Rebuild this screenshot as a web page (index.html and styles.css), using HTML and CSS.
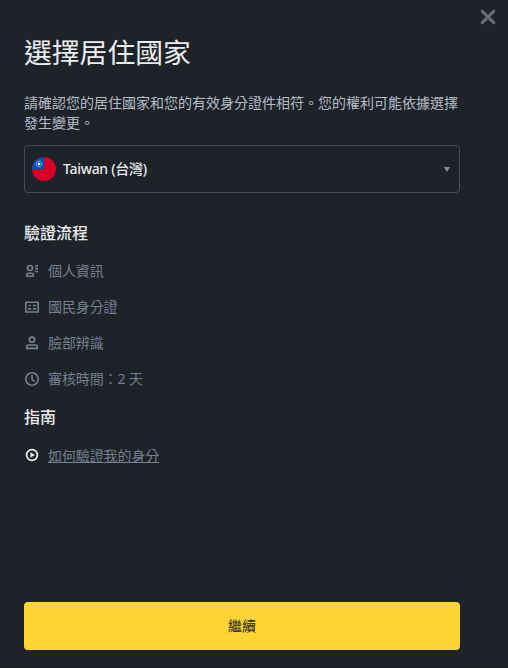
FILE: index.html
```html
<!DOCTYPE html>
<html lang="zh-Hant">
<head>
<meta charset="utf-8">
<title>選擇居住國家</title>
<link rel="stylesheet" href="styles.css">
</head>
<body>

<div class="modal">
	<button class="close" aria-label="close">
		<svg viewBox="0 0 16 16"><path d="M2.3 2.3l11.4 11.4M13.7 2.3L2.3 13.7"/></svg>
	</button>

	<h1>選擇居住國家</h1>
	<p class="intro">請確認您的居住國家和您的有效身分證件相符。您的權利可能依據選擇發生變更。</p>

	<div class="select">
		<svg class="flag" viewBox="0 0 24 24">
			<clipPath id="round"><circle cx="12" cy="12" r="12"/></clipPath>
			<g clip-path="url(#round)">
				<rect width="24" height="24" fill="#d80027"/>
				<rect width="12" height="12" fill="#0052b4"/>
				<circle cx="7" cy="7" r="2.8" fill="none" stroke="#a9c6e8" stroke-width="1" stroke-dasharray="1.1 .36"/>
				<circle cx="7" cy="7" r="1.3" fill="#fff"/>
			</g>
		</svg>
		<span class="country">Taiwan (台灣)</span>
		<span class="arrow"></span>
	</div>

	<h2>驗證流程</h2>
	<ul class="steps">
		<li>
			<svg class="icon" viewBox="0 0 16 16"><circle cx="6" cy="5" r="2.5"/><path d="M2.7 13.2v-1.4q0-1.5 1.5-1.5h3.6q1.5 0 1.5 1.5v1.4zM11 2.7h3M11 5.6h3M11 8.5h3"/></svg>
			<span>個人資訊</span>
		</li>
		<li>
			<svg class="icon" viewBox="0 0 16 16"><path d="M1.8 3.2h12.4v9.8H1.8zM4 9.9h3.4M9 6.5h3M9 9.9h3M4.6 6.5h2.2"/></svg>
			<span>國民身分證</span>
		</li>
		<li>
			<svg class="icon" viewBox="0 0 16 16"><circle cx="8" cy="4.7" r="2.6"/><path d="M2.7 13.4v-1.6q0-1.8 1.8-1.8h7q1.8 0 1.8 1.8v1.6z"/></svg>
			<span>臉部辨識</span>
		</li>
		<li>
			<svg class="icon" viewBox="0 0 16 16"><circle cx="8" cy="8" r="6.2"/><path d="M8 4v4.3l2.4 2.5"/></svg>
			<span>審核時間：2 天</span>
		</li>
	</ul>

	<h2>指南</h2>
	<div class="guide">
		<svg class="icon play" viewBox="0 0 16 16"><circle cx="8" cy="8" r="5.4"/><path d="M6.4 5.2L11 8l-4.6 2.8z"/></svg>
		<a href="#">如何驗證我的身分</a>
	</div>

	<button class="continue">繼續</button>
</div>

</body>
</html>
```
FILE: styles.css
```css
* {
	box-sizing: border-box;
}

body {
	margin: 0;
	background: #1e2329;
	color: #eaecef;
	font-family: "Noto Sans", "Noto Sans CJK TC", sans-serif;
	font-size: 14px;
}

.modal {
	position: relative;
	display: flex;
	flex-direction: column;
	height: 668px;
	padding: 34px 48px 17px 24px;
	border-bottom: 1px solid #191c20;
}

button {
	border: 0;
	padding: 0;
	font: inherit;
}

.close {
	position: absolute;
	top: 9px;
	right: 12px;
	width: 16px;
	height: 16px;
	background: none;
}
.close svg {
	display: block;
	fill: none;
	stroke: #646b78;
	stroke-width: 3.2;
	stroke-linecap: round;
}

h1 {
	margin: 0;
	font-size: 27.8px;
	font-weight: 400;
	line-height: 36px;
}

.intro {
	margin: 23px 0 0;
	color: #b7bdc6;
	line-height: 20px;
}

.select {
	display: flex;
	align-items: center;
	height: 48px;
	margin-top: 12px;
	padding: 0 9px 0 7px;
	border: 1px solid #474d57;
	border-radius: 4px;
}
.flag {
	width: 24px;
	height: 24px;
}
.country {
	flex: 1;
	margin: -2px 0 0 7px;
	font-weight: 500;
	letter-spacing: -.3px;
}
.arrow {
	border: 3px solid transparent;
	border-top: 5px solid #848e9c;
	border-bottom: 0;
}

h2 {
	margin: 28px 0 0;
	font-size: 16px;
	font-weight: 500;
	line-height: 24px;
}

.steps {
	margin: 8px 0 0;
	padding: 0;
	list-style: none;
	color: #76808f;
}
.steps li,
.guide {
	display: flex;
	align-items: center;
	height: 36px;
}
.steps span {
	margin-top: -2px;
	letter-spacing: -.1px;
}
.steps + h2 {
	margin-top: 8px;
}

.icon {
	width: 16px;
	height: 16px;
	margin-right: 8px;
	fill: none;
	stroke: #76808f;
	stroke-width: 1.6;
}
.play {
	stroke: #eaecef;
	stroke-width: 1.7;
}
.play path {
	fill: #eaecef;
	stroke: none;
}

.guide {
	margin-top: 8px;
}
.guide a {
	color: #76808f;
	letter-spacing: -.1px;
}

.continue {
	height: 48px;
	margin-top: auto;
	padding-bottom: 2px;
	border-radius: 4px;
	background: #fcd535;
	color: #1e2329;
}
```
